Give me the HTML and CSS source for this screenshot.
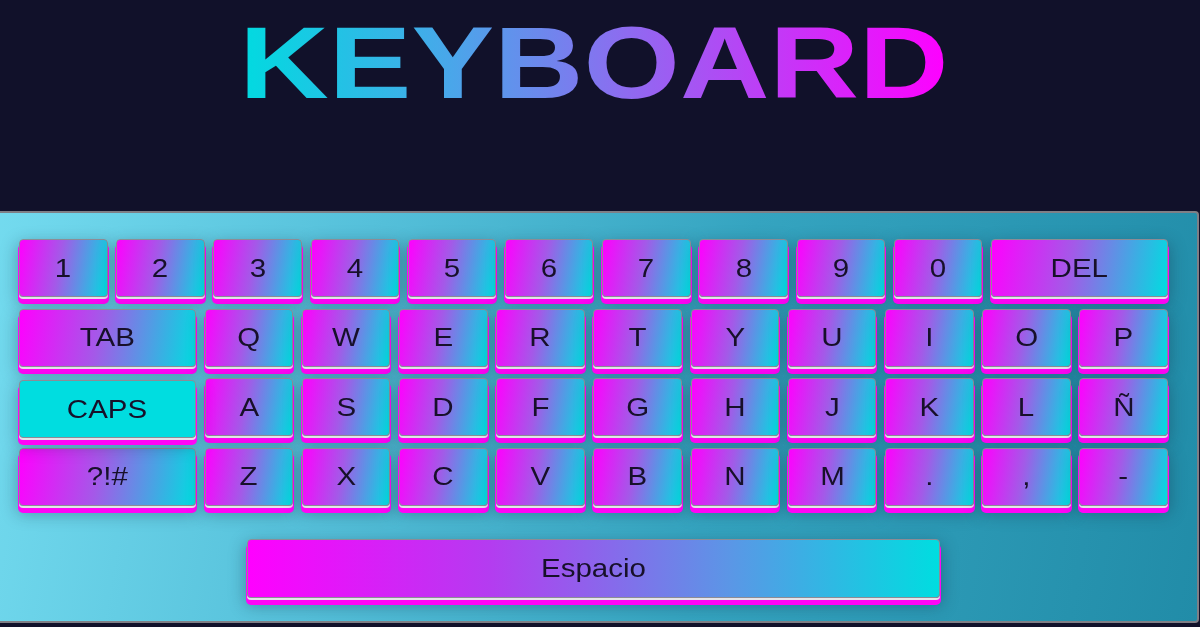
FILE: index.html
```html
<!DOCTYPE html>
<html lang="es">
<head>
<meta charset="utf-8">
<title>Keyboard</title>
<link rel="stylesheet" href="styles.css">
</head>
<body>
<div class="page">
  <header class="header">
    <h1 class="title"><span class="title-text">KEYBOARD</span></h1>
  </header>
  <section class="keyboard">
    <div class="rows">
      <div class="row">
        <button class="key"><span>1</span></button>
        <button class="key"><span>2</span></button>
        <button class="key"><span>3</span></button>
        <button class="key"><span>4</span></button>
        <button class="key"><span>5</span></button>
        <button class="key"><span>6</span></button>
        <button class="key"><span>7</span></button>
        <button class="key"><span>8</span></button>
        <button class="key"><span>9</span></button>
        <button class="key"><span>0</span></button>
        <button class="key wide"><span>DEL</span></button>
      </div>
      <div class="row">
        <button class="key wide"><span>TAB</span></button>
        <button class="key"><span>Q</span></button>
        <button class="key"><span>W</span></button>
        <button class="key"><span>E</span></button>
        <button class="key"><span>R</span></button>
        <button class="key"><span>T</span></button>
        <button class="key"><span>Y</span></button>
        <button class="key"><span>U</span></button>
        <button class="key"><span>I</span></button>
        <button class="key"><span>O</span></button>
        <button class="key"><span>P</span></button>
      </div>
      <div class="row">
        <button class="key wide active"><span>CAPS</span></button>
        <button class="key"><span>A</span></button>
        <button class="key"><span>S</span></button>
        <button class="key"><span>D</span></button>
        <button class="key"><span>F</span></button>
        <button class="key"><span>G</span></button>
        <button class="key"><span>H</span></button>
        <button class="key"><span>J</span></button>
        <button class="key"><span>K</span></button>
        <button class="key"><span>L</span></button>
        <button class="key"><span>Ñ</span></button>
      </div>
      <div class="row">
        <button class="key wide"><span>?!#</span></button>
        <button class="key"><span>Z</span></button>
        <button class="key"><span>X</span></button>
        <button class="key"><span>C</span></button>
        <button class="key"><span>V</span></button>
        <button class="key"><span>B</span></button>
        <button class="key"><span>N</span></button>
        <button class="key"><span>M</span></button>
        <button class="key"><span>.</span></button>
        <button class="key"><span>,</span></button>
        <button class="key"><span>-</span></button>
      </div>
    </div>
    <div class="space-row">
      <button class="key space"><span>Espacio</span></button>
    </div>
  </section>
</div>
</body>
</html>
```

FILE: styles.css
```css
* {
  box-sizing: border-box;
}

html, body {
  margin: 0;
  padding: 0;
  height: 100%;
}

body {
  background: #11112a;
  overflow: hidden;
  font-family: "Liberation Sans", Arial, sans-serif;
}

.page {
  width: 1211px;
  margin-left: -12px;
}

.header {
  height: 211px;
  padding-top: 12px;
  text-align: center;
}

.title {
  margin: 0;
  font-size: 102px;
  line-height: 1;
  font-weight: 700;
}

.title-text {
  display: inline-block;
  transform: scaleX(1.215);
  background: linear-gradient(to right, #00dbe0 0%, #4aa6ea 30%, #8f6af0 55%, #ff00ff 100%);
  -webkit-background-clip: text;
  background-clip: text;
  color: transparent;
}

.keyboard {
  height: 412px;
  border: 2px solid #7f7f86;
  border-radius: 4px;
  background: linear-gradient(100deg, #74dbef 0%, #55c0da 30%, #35a4c0 60%, #218ca8 100%);
  padding-top: 26px;
  display: flex;
  flex-direction: column;
  align-items: center;
}

.rows {
  width: 1149px;
  display: flex;
  flex-direction: column;
  gap: 11.5px;
}

.row {
  display: flex;
  justify-content: space-between;
  height: 58px;
}

.key {
  flex: 0 0 88.5px;
  width: 88.5px;
  height: 58px;
  padding: 0;
  margin: 0;
  border: 1px solid #8c8c96;
  border-radius: 4px;
  background: linear-gradient(100deg, #ff00ff 0%, #a35ae8 45%, #4aa2e4 75%, #00dde0 100%);
  box-shadow:
    0 2px 0 0 #e4e4ea,
    0 6px 0 1px #ff05f6,
    0 6px 16px 2px rgba(20, 40, 60, 0.35);
  color: #17102a;
  font-family: "Liberation Sans", Arial, sans-serif;
  font-size: 25px;
  display: flex;
  align-items: center;
  justify-content: center;
  cursor: pointer;
}

.key span {
  display: inline-block;
  transform: scaleX(1.18);
}

.key.wide {
  flex: 0 0 177px;
  width: 177px;
}

.key.active {
  background: #00dde0;
  transform: translateY(2px);
}

.space-row {
  margin-top: 33px;
  width: 1149px;
  display: flex;
  justify-content: center;
}

.key.space {
  flex: 0 0 693px;
  width: 693px;
  height: 59px;
  background: linear-gradient(to right, #ff00ff 0%, #b43cf0 35%, #5a97e6 70%, #00dde0 100%);
}
```
